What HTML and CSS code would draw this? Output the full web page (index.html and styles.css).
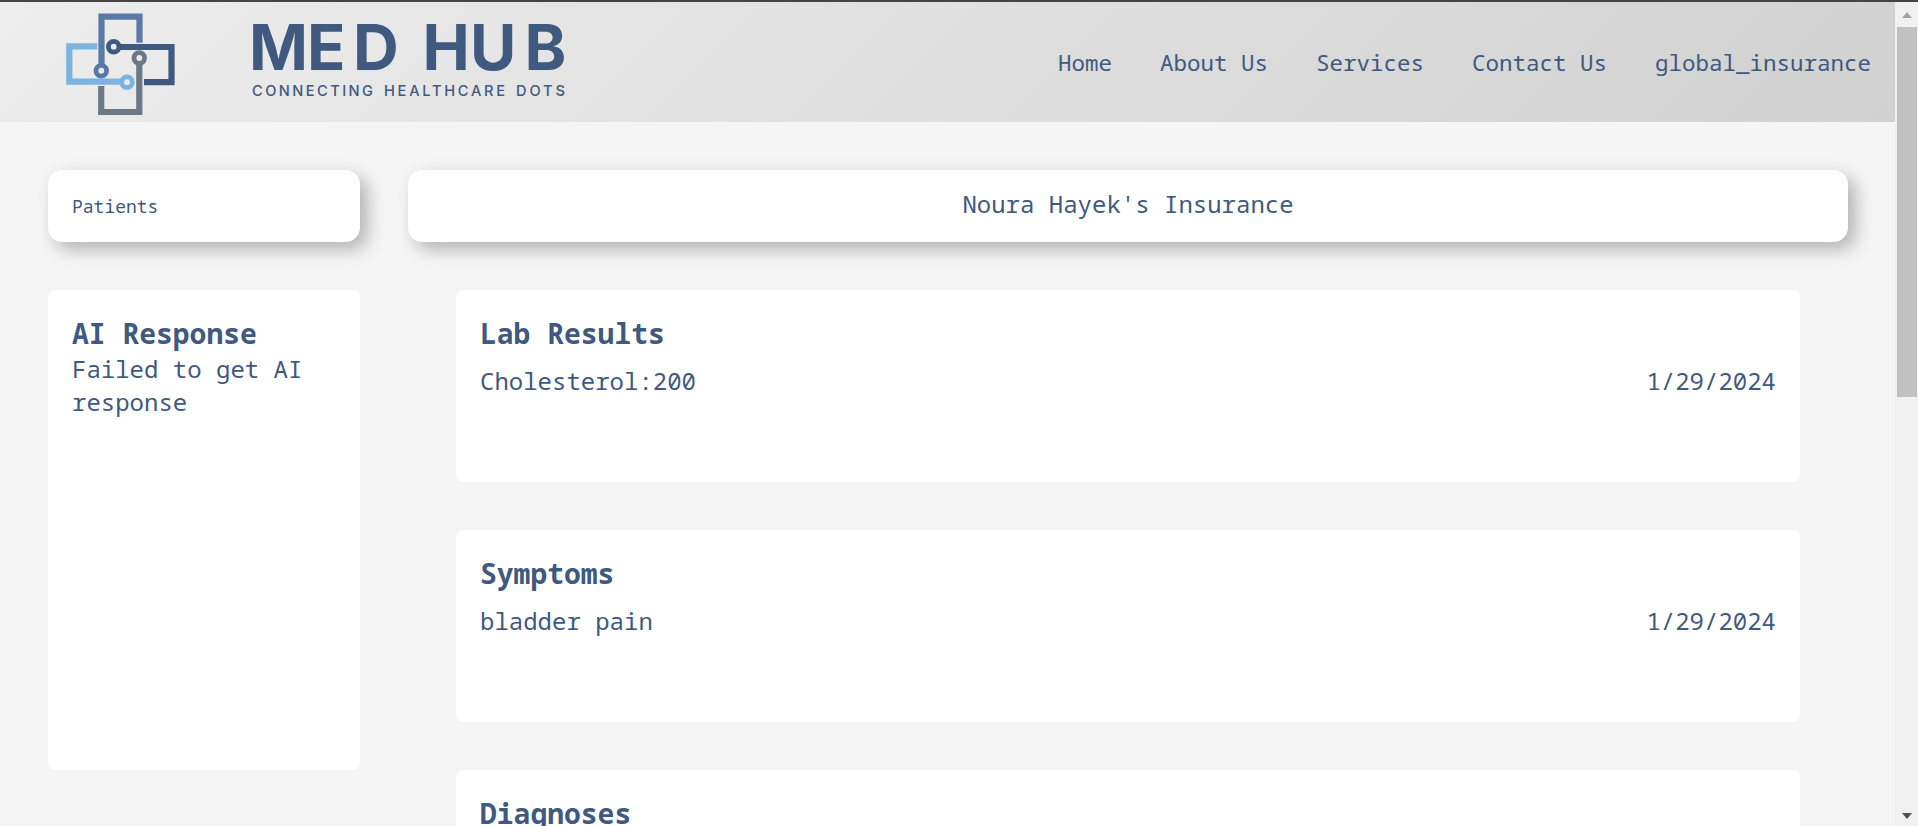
FILE: index.html
```
<!DOCTYPE html>
<html lang="en">
<head>
<meta charset="utf-8">
<title>Med Hub</title>
<link rel="stylesheet" href="styles.css">
</head>
<body>
<div class="page">
  <header class="header">
    <svg class="mark" width="112" height="108" viewBox="64 8 112 108" fill="none" stroke-width="6.200">
      <g stroke="#5a7aa6"><path d="M101.500 66V16.700H139.500V42.700"/><circle cx="101.300" cy="70.700" r="5.300" stroke-width="4.800"/></g>
      <g stroke="#7cb4e1"><path d="M97.300 46.300H69.300V81.700H122"/><circle cx="127" cy="82.200" r="5.300" stroke-width="4.800"/></g>
      <g stroke="#40597e"><path d="M118 47H171.500V82.200H144"/><circle cx="113.700" cy="46.700" r="5.300" stroke-width="4.800"/></g>
      <g stroke="#6c7985"><path d="M139.300 63V112H101.200V86"/><circle cx="139.300" cy="58" r="5.300" stroke-width="4.800"/></g>
    </svg>
    <svg class="wordmark" width="330" height="100" viewBox="0 0 330 100">
      <text class="brand" y="58" x="-3 55 101 148 170.500 218 272.500">MED HUB</text>
      <text class="tagline" y="83.500"><tspan x="0" textLength="121">CONNECTING</tspan> <tspan x="132" textLength="121">HEALTHCARE</tspan> <tspan x="264" textLength="49">DOTS</tspan></text>
    </svg>
    <nav class="nav"><a>Home</a><a>About Us</a><a>Services</a><a>Contact Us</a><a>global_insurance</a></nav>
  </header>
  <main class="main">
    <aside class="side"><div class="pill patients">Patients</div><section class="card ai"><h2>AI Response</h2><p>Failed to get AI response</p></section></aside>
    <div class="content">
      <div class="pill title">Noura Hayek's Insurance</div>
      <div class="records">
        <section class="card"><h2>Lab Results</h2><div class="row"><span>Cholesterol:200</span><span>1/29/2024</span></div></section>
        <section class="card"><h2>Symptoms</h2><div class="row"><span>bladder pain</span><span>1/29/2024</span></div></section>
        <section class="card"><h2>Diagnoses</h2></section>
      </div>
    </div>
  </main>
</div>
<div class="scrollbar"><svg width="10" height="6"><path d="M0 6L5 0L10 6z" fill="#a3a3a3"/></svg><div class="thumb"></div><svg class="down" width="10" height="6"><path d="M0 0H10L5 6z" fill="#505050"/></svg></div>
</body>
</html>
```
FILE: styles.css
```
* { box-sizing: border-box; margin: 0; }
body { display: flex; height: 826px; overflow: hidden; border-top: 2px solid #444; background: #f5f5f5; color: #40597e; font-family: "Noto Sans Mono", "Noto Mono", "DejaVu Sans Mono", monospace; font-size: 24px; }
.page { width: 1895px; height: 824px; overflow: hidden; }
.header { height: 120px; display: flex; align-items: center; padding: 0 24px 0 64px; background: linear-gradient(135deg, #ededed, #d1d1d1); }
.wordmark { margin-left: 76px; overflow: visible; font-family: Inter, sans-serif; fill: #40597e; }
.brand { font-size: 63.3px; font-weight: 700; }
.tagline { font-size: 14.6px; font-weight: 500; }
.nav { margin-left: auto; display: flex; gap: 48px; font-size: 22.5px; }
.main { display: flex; gap: 48px; padding: 48px 47px 0 48px; }
.side { width: 312px; }
.content { flex: 1; }
.pill { height: 72px; padding: 0 24px; display: flex; align-items: center; border-radius: 14.4px; background: #fff; box-shadow: 7.2px 7.2px 18px rgba(0,0,0,.28); }
.patients { font-size: 18px; }
.title { justify-content: center; padding-bottom: 6px; }
.card { height: 192px; padding: 24px; border-radius: 7.2px; background: #fff; }
.ai { margin-top: 48px; height: 480px; }
.records { margin: 48px 48px 0; display: grid; gap: 48px; }
h2 { font-size: 28px; line-height: 38px; }
.row { display: flex; justify-content: space-between; margin-top: 12px; }
.scrollbar { width: 23px; background: #f0f0f0; display: flex; flex-direction: column; align-items: center; padding: 10px 0 7px; }
.thumb { width: 20px; height: 370px; margin-top: 9px; background: #c1c1c1; }
.down { margin-top: auto; }
```
